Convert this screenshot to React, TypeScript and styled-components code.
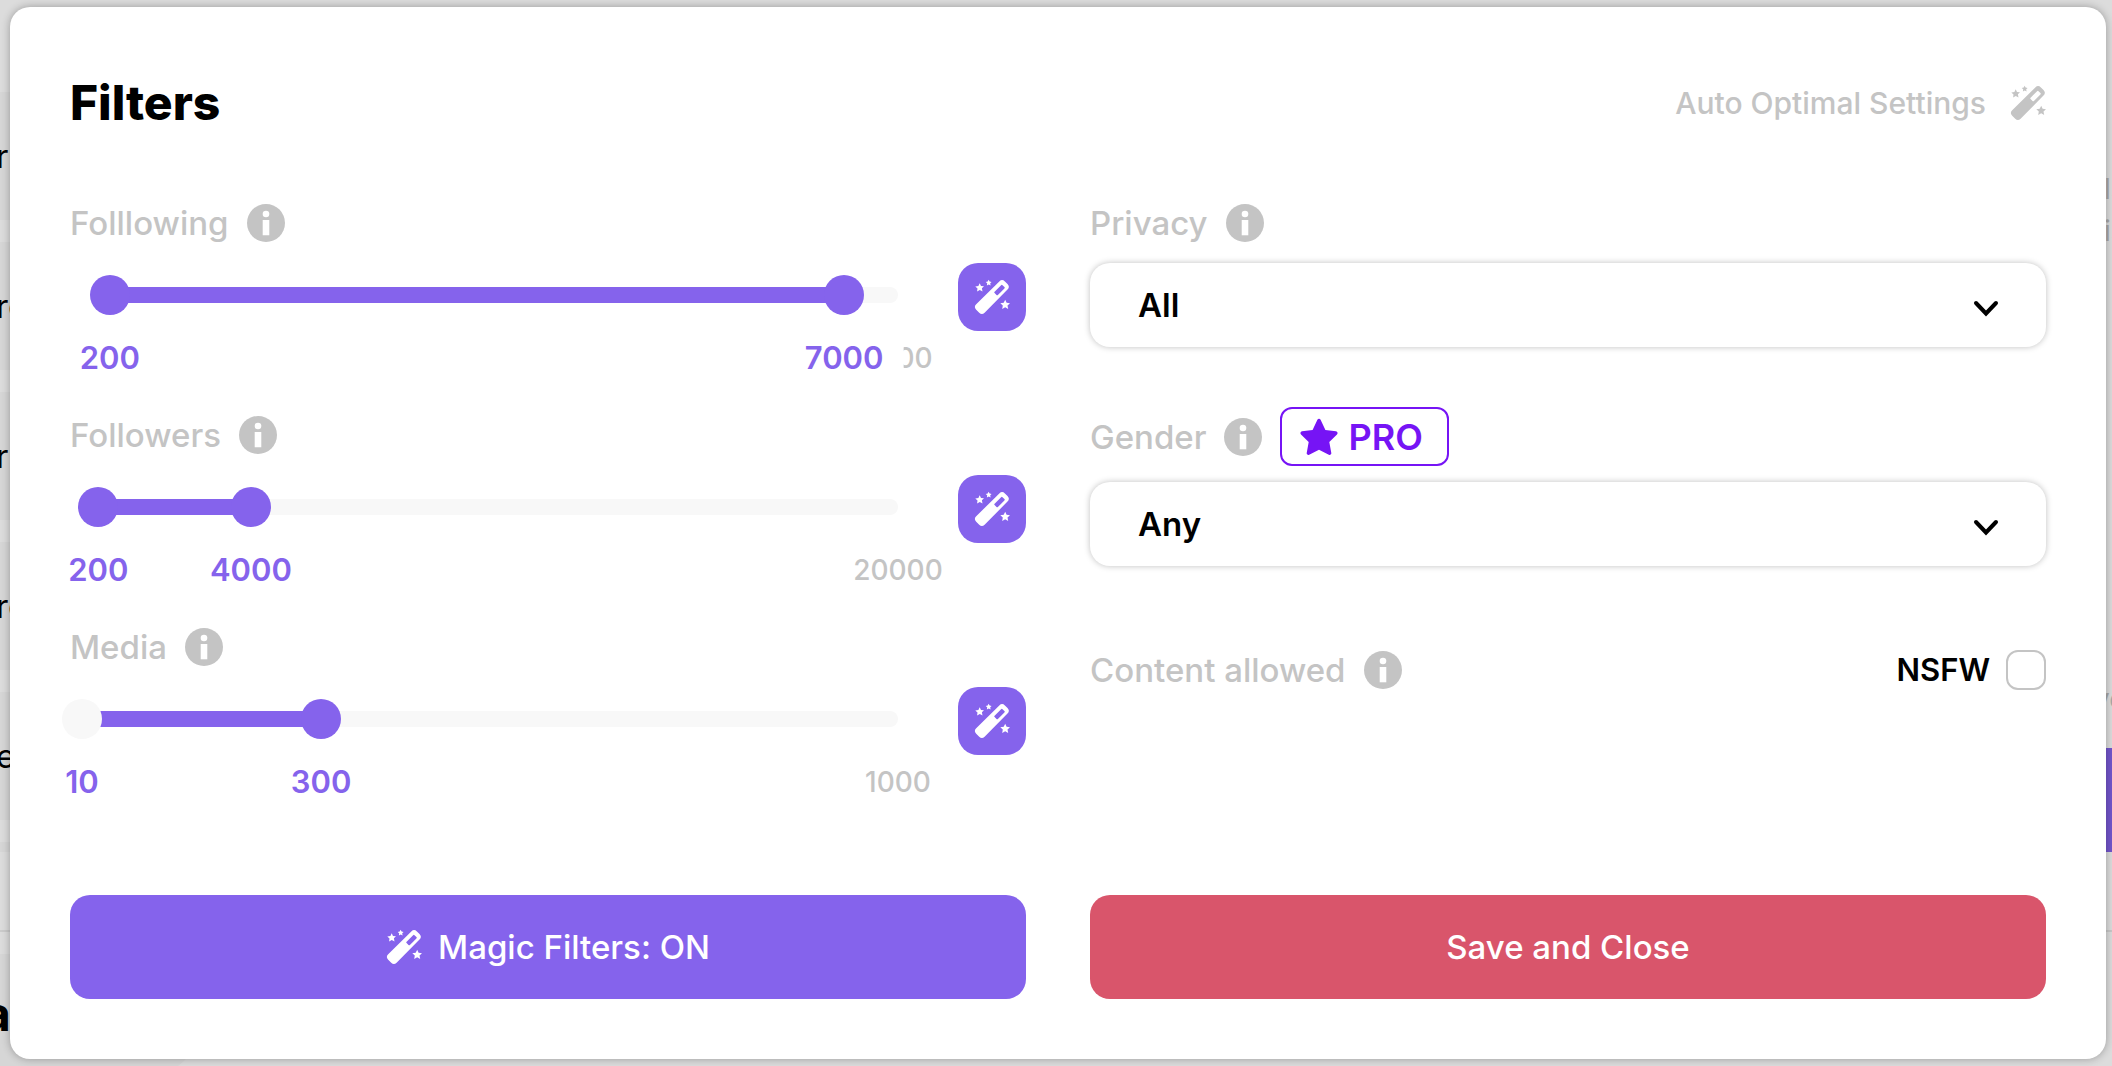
import React, { useState } from "react";
import styled, { createGlobalStyle, css } from "styled-components";

const violet = "#8563ec";
const proViolet = "#7614f5";
const grey = "#c4c4c4";
const pale = "#f8f8f8";

const Global = createGlobalStyle`
  *, *::before, *::after { box-sizing: border-box; }
  body { margin: 0; background: #dcdcdc; font-family: Inter, "Open Sans", sans-serif; color: #000; }
  button, input, select { font: inherit; color: inherit; margin: 0; }
`;

const Stage = styled.div`
  position: relative;
  min-height: 100vh;
  padding: 7px 6px 7px 10px;
  overflow: hidden;
  display: flex;
`;

const Backdrop = styled.div`
  position: absolute;
  inset: 0;
  display: flex;
  justify-content: space-between;
  background: #dcdcdc;
  overflow: hidden;
`;

const AccountList = styled.div`
  display: flex;
  flex-direction: column;
  gap: 22px;
  width: 210px;
  padding-top: 92px;
`;

const Account = styled.div`
  flex: none;
  display: flex;
  align-items: center;
  height: 128px;
  background: #d6d6d6;
  font-size: 33px;
  line-height: 48px;
  text-indent: -4px;
`;

const ListEnd = styled.div`
  flex: none;
  height: 10px;
  background: #d6d6d6;
`;

const PanelTop = styled.div`
  flex: none;
  height: 80px;
  margin-top: -22px;
  border-bottom: 2px solid #cbcbcb;
`;

const Footer = styled.div`
  flex: none;
  height: 128px;
  padding-top: 32px;
  background: #d6d6d6;
  border-bottom-right-radius: 80px;
  font-size: 48px;
  font-weight: 700;
  line-height: 56px;
  text-indent: -17px;
`;

const SidePanel = styled.div`
  display: flex;
  flex-direction: column;
  align-items: flex-start;
  width: 8px;
  padding-top: 168px;
  color: #a8a8a8;
  font-size: 28px;
  line-height: 42px;
`;

const SideNote = styled.span`
  margin: 426px 0 0 -10px;
`;

const SideButton = styled.div`
  width: 100%;
  height: 104px;
  margin-top: 28px;
  background: #7255cb;
`;

const SideRule = styled.div`
  width: 100%;
  height: 80px;
  border-bottom: 2px solid #c8c8c8;
`;

const Dialog = styled.section`
  position: relative;
  flex: 1;
  min-width: 0;
  display: flex;
  flex-direction: column;
  padding: 60px;
  background: #fff;
  border-radius: 20px;
  box-shadow: 0 0 8px rgba(0, 0, 0, 0.3);
`;

const Header = styled.header`
  display: flex;
  align-items: center;
  justify-content: space-between;
  margin-bottom: 65px;
`;

const Title = styled.h1`
  margin: 0;
  font-size: 48px;
  font-weight: 800;
  line-height: 72px;
`;

const AutoButton = styled.button`
  display: flex;
  align-items: center;
  gap: 24px;
  padding: 0;
  border: 0;
  background: none;
  color: ${grey};
  font-size: 30px;
  font-weight: 500;
  line-height: 42px;
  cursor: pointer;
`;

const Columns = styled.div`
  display: grid;
  grid-template-columns: 1fr 1fr;
  column-gap: 64px;
  flex: 1;
`;

const Sliders = styled.div`
  display: flex;
  flex-direction: column;
  gap: 34px;
`;

const Options = styled.div`
  display: flex;
  flex-direction: column;
`;

const LabelRow = styled.div<{ $height?: number; $after?: number }>`
  display: flex;
  align-items: center;
  gap: 18px;
  height: ${(p) => p.$height ?? 38}px;
  margin-bottom: ${(p) => p.$after ?? 0}px;
  color: ${grey};
  font-size: 33px;
  font-weight: 500;
  line-height: 38px;
`;

const SliderBody = styled.div`
  display: flex;
  align-items: flex-start;
  gap: 40px;
  margin-left: -8px;
`;

const SliderArea = styled.div`
  flex: 1;
  padding-top: 12px;
`;

const Rail = styled.div`
  position: relative;
  height: 40px;
  padding: 12px 20px;
`;

const Track = styled.div`
  height: 16px;
  border-radius: 8px;
  background: ${pale};
`;

const Fill = styled.div`
  height: 16px;
  background: ${violet};
`;

const thumb = css`
  width: 40px;
  height: 40px;
  border: 0;
  border-radius: 50%;
  pointer-events: auto;
  cursor: pointer;
`;

const Range = styled.input<{ $pale?: boolean }>`
  position: absolute;
  inset: 0;
  width: 100%;
  height: 40px;
  appearance: none;
  background: none;
  pointer-events: none;
  &::-webkit-slider-thumb {
    appearance: none;
    ${thumb}
    background: ${(p) => (p.$pale ? pale : violet)};
  }
  &::-moz-range-thumb {
    ${thumb}
    background: ${(p) => (p.$pale ? pale : violet)};
  }
`;

const Values = styled.div`
  position: relative;
  height: 48px;
  margin: 19px 20px 0;
`;

const Value = styled.span<{ $limit?: boolean }>`
  position: absolute;
  top: 0;
  padding: 0 20px;
  transform: translateX(-50%);
  background: #fff;
  color: ${(p) => (p.$limit ? grey : violet)};
  font-size: ${(p) => (p.$limit ? 28 : 31)}px;
  font-weight: ${(p) => (p.$limit ? 500 : 600)};
  line-height: 48px;
`;

const WandButton = styled.button`
  display: grid;
  place-items: center;
  width: 68px;
  height: 68px;
  padding: 0;
  border: 0;
  border-radius: 20px;
  background: ${violet};
  color: #fff;
  cursor: pointer;
`;

const SelectBox = styled.div`
  position: relative;
  margin-bottom: 60px;
`;

const Select = styled.select`
  display: block;
  width: 100%;
  height: 84px;
  padding: 0 48px;
  appearance: none;
  border: 0;
  border-radius: 20px;
  background: #fff;
  box-shadow: 0 0 6px rgba(0, 0, 0, 0.25);
  font-size: 33px;
  font-weight: 600;
  cursor: pointer;
`;

const Chevron = styled.svg`
  position: absolute;
  right: 46px;
  top: 36px;
  pointer-events: none;
`;

const ProBadge = styled.span`
  display: flex;
  align-items: center;
  gap: 10px;
  height: 59px;
  padding: 0 24px 0 18px;
  border: 2px solid ${proViolet};
  border-radius: 12px;
  color: ${proViolet};
  font-size: 36px;
  font-weight: 600;
`;

const ContentRow = styled.div`
  display: flex;
  align-items: center;
  justify-content: space-between;
  margin-top: 24px;
`;

const Check = styled.label`
  display: flex;
  align-items: center;
  gap: 16px;
  font-size: 31px;
  font-weight: 600;
  line-height: 40px;
`;

const Box = styled.input`
  appearance: none;
  width: 40px;
  height: 40px;
  border: 2px solid ${grey};
  border-radius: 12px;
  background: #fff;
  &:checked { background: ${violet}; }
`;

const Actions = styled.footer`
  display: grid;
  grid-template-columns: 1fr 1fr;
  column-gap: 64px;
`;

const Action = styled.button<{ $color: string }>`
  display: flex;
  align-items: center;
  justify-content: center;
  gap: 16px;
  height: 104px;
  border: 0;
  border-radius: 20px;
  background: ${(p) => p.$color};
  color: #fff;
  font-size: 33px;
  font-weight: 500;
  cursor: pointer;
`;

const Wand = () => (
  <svg width="36" height="36" viewBox="0 0 36 36" fill="currentColor" aria-hidden="true">
    <path
      fillRule="evenodd"
      d="M25.3 2.4a4 4 0 0 1 5.6 0l2.6 2.6a4 4 0 0 1 0 5.6L10.6 33.7a3.8 3.8 0 0 1-5.4 0l-3-3a3.8 3.8 0 0 1 0-5.4ZM27.1 6.2l-6.5 6.5a1 1 0 0 0 0 1.4l1.9 1.9a1 1 0 0 0 1.4 0l6.5-6.5a1 1 0 0 0 0-1.4l-1.9-1.9a1 1 0 0 0-1.4 0Z"
    />
    <path d="m5.7 4.3 1.3 2.6 3 .3-2.1 2.1.6 3.1-2.7-1.3-2.7 1.4.4-3-2.2-2.1 3.1-.5Z" />
    <path d="m14.6.8 1 1.8 2 .3-1.4 1.4.4 2.1-1.9-1-1.8 1 .3-2.1L11.7 2.9l2-.3Z" />
    <path d="m31.2 20.8 1.4 3 3.4.4-2.5 2.3.7 3.4-3-1.6-3 1.7.6-3.4-2.5-2.3 3.4-.5Z" />
  </svg>
);

const Info = () => (
  <svg width="38" height="38" viewBox="0 0 38 38" role="img" aria-label="Info">
    <circle cx="19" cy="19" r="19" fill={grey} />
    <circle cx="19" cy="10" r="3.3" fill="#fff" />
    <path d="M15.7 16h6.6v15.3h-6.6Z" fill="#fff" />
  </svg>
);

const Star = () => (
  <svg width="38" height="38" viewBox="0 0 38 38" fill="currentColor" aria-hidden="true">
    <path d="M17.4 1.8a1.8 1.8 0 0 1 3.2 0L25.4 11.9 36 13.3a1.8 1.8 0 0 1 1 3.1L29.3 24.1l2 10.8a1.7 1.7 0 0 1-2.5 1.8L19 31.8l-9.8 4.9a1.7 1.7 0 0 1-2.5-1.8l2-10.8L1 16.4a1.8 1.8 0 0 1 1-3.1l10.6-1.4Z" />
  </svg>
);

type Stop = { value: number; at: number };
type Scale = { label: string; low: Stop; high: Stop; limit: number };

/* `at` is the handle's place along the rail, in thousandths. */
const scales: Scale[] = [
  { label: "Folllowing", low: { value: 200, at: 34 }, high: { value: 7000, at: 934 }, limit: 7500 },
  { label: "Followers", low: { value: 200, at: 20 }, high: { value: 4000, at: 207 }, limit: 20000 },
  { label: "Media", low: { value: 10, at: 0 }, high: { value: 300, at: 293 }, limit: 1000 },
];

function RangeFilter({ label, low, high, limit }: Scale) {
  const [from, setFrom] = useState(low.at);
  const [to, setTo] = useState(high.at);
  const perStep = (high.value - low.value) / (high.at - low.at);
  const toValue = (at: number) => Math.round(low.value + (at - low.at) * perStep);
  return (
    <div>
      <LabelRow $after={21}>
        {label}
        <Info />
      </LabelRow>
      <SliderBody>
        <SliderArea>
          <Rail>
            <Track style={{ marginLeft: `${from / 10}%` }}>
              <Fill style={{ width: `${((to - from) / (1000 - from)) * 100}%` }} />
            </Track>
            <Range
              type="range"
              min={0}
              max={1000}
              value={from}
              $pale={from === 0}
              aria-label={`${label} minimum`}
              aria-valuetext={String(toValue(from))}
              onChange={(e) => setFrom(Math.min(Number(e.target.value), to))}
            />
            <Range
              type="range"
              min={0}
              max={1000}
              value={to}
              aria-label={`${label} maximum`}
              aria-valuetext={String(toValue(to))}
              onChange={(e) => setTo(Math.max(Number(e.target.value), from))}
            />
          </Rail>
          <Values>
            <Value $limit style={{ left: "100%" }}>{limit}</Value>
            <Value style={{ left: `${from / 10}%` }}>{toValue(from)}</Value>
            <Value style={{ left: `${to / 10}%` }}>{toValue(to)}</Value>
          </Values>
        </SliderArea>
        <WandButton type="button" aria-label={`Optimal ${label}`}>
          <Wand />
        </WandButton>
      </SliderBody>
    </div>
  );
}

function Choice({ id, options }: { id: string; options: string[] }) {
  return (
    <SelectBox>
      <Select id={id}>
        {options.map((o) => (
          <option key={o}>{o}</option>
        ))}
      </Select>
      <Chevron width="28" height="20" viewBox="0 0 28 20" aria-hidden="true">
        <path d="m4 4 10 10.5L24 4" fill="none" stroke="#000" strokeWidth="4" strokeLinecap="round" />
      </Chevron>
    </SelectBox>
  );
}

export default function App() {
  return (
    <Stage>
      <Global />
      <Backdrop aria-hidden="true">
        <AccountList>
          {["r", "re", "r", "re", "e"].map((text, i) => (
            <Account key={i}>{text}</Account>
          ))}
          <ListEnd />
          <PanelTop />
          <Footer>a</Footer>
        </AccountList>
        <SidePanel>
          <span>ls</span>
          <span>is</span>
          <SideNote>ve</SideNote>
          <SideButton />
          <SideRule />
        </SidePanel>
      </Backdrop>
      <Dialog aria-label="Filters">
        <Header>
          <Title>Filters</Title>
          <AutoButton type="button">
            Auto Optimal Settings
            <Wand />
          </AutoButton>
        </Header>
        <Columns>
          <Sliders>
            {scales.map((s) => (
              <RangeFilter key={s.label} {...s} />
            ))}
          </Sliders>
          <Options>
            <LabelRow $after={21}>
              <label htmlFor="privacy">Privacy</label>
              <Info />
            </LabelRow>
            <Choice id="privacy" options={["All", "Public", "Private"]} />
            <LabelRow $height={59} $after={16}>
              <label htmlFor="gender">Gender</label>
              <Info />
              <ProBadge>
                <Star />
                PRO
              </ProBadge>
            </LabelRow>
            <Choice id="gender" options={["Any", "Female", "Male"]} />
            <ContentRow>
              <LabelRow>
                Content allowed
                <Info />
              </LabelRow>
              <Check>
                NSFW
                <Box type="checkbox" />
              </Check>
            </ContentRow>
          </Options>
        </Columns>
        <Actions>
          <Action type="button" $color={violet}>
            <Wand />
            Magic Filters: ON
          </Action>
          <Action type="button" $color="#d9556b">Save and Close</Action>
        </Actions>
      </Dialog>
    </Stage>
  );
}
